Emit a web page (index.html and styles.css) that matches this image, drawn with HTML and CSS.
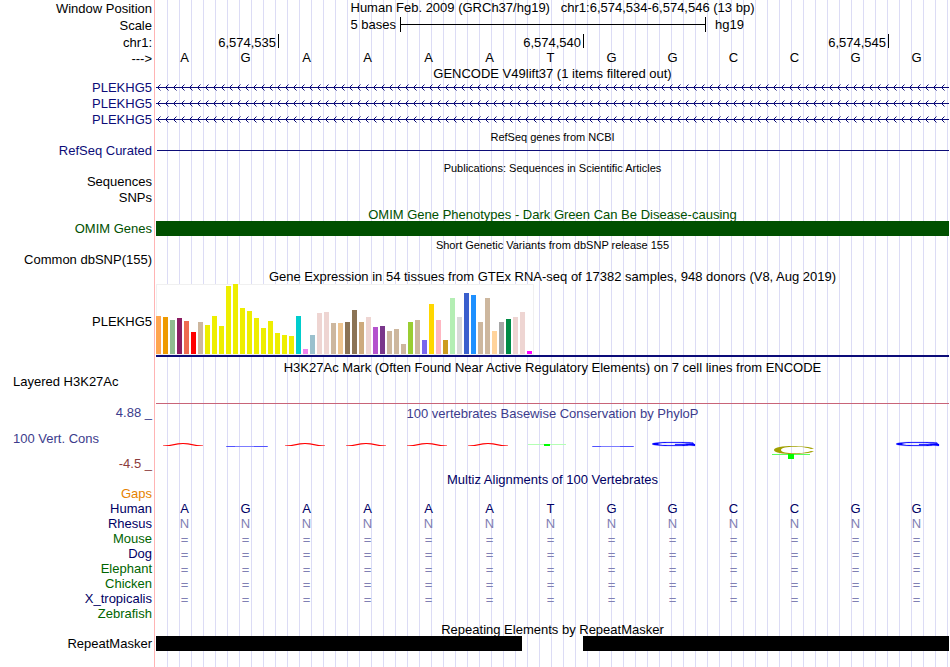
FILE: index.html
```
<!DOCTYPE html>
<html lang="en">
<head>
    <meta charset="utf-8">
    <title>Human hg19 chr1:6,574,534-6,574,546</title>
    <link rel="stylesheet" href="styles.css">
</head>
<body>
    <main class="browser">
        <div class="row tall">
            <div class="label">Window Position</div>
            <div class="track title top">Human Feb. 2009 (GRCh37/hg19) &nbsp; chr1:6,574,534-6,574,546 (13 bp)</div>
        </div>
        <div class="row tall">
            <div class="label">Scale</div>
            <div class="track columns scale">
                <span class="scale-size">5 bases</span>
                <span class="scale-bar"></span>
                <span class="scale-db">hg19</span>
            </div>
        </div>
        <div class="row tall">
            <div class="label">chr1:</div>
            <div class="track columns ruler">
                <span class="tick first">6,574,535</span>
                <span class="tick">6,574,540</span>
                <span class="tick">6,574,545</span>
            </div>
        </div>
        <div class="row line">
            <div class="label">---&gt;</div>
            <div class="track columns bases" data-bases="AGAAAATGGCCGG"></div>
        </div>

        <div class="row short">
            <div class="label"></div>
            <div class="track title">GENCODE V49lift37 (1 items filtered out)</div>
        </div>
        <div class="row navy">
            <div class="label">PLEKHG5</div>
            <div class="track">
                <svg class="intron" width="100%" height="16">
                    <defs>
                        <pattern id="chevron" width="8" height="16" patternUnits="userSpaceOnUse">
                            <path d="M4.5 4.5L1.5 7.5L4.5 10.5" fill="none" stroke="#0c0c78" stroke-width="1"/>
                        </pattern>
                    </defs>
                    <rect width="100%" height="16" fill="url(#chevron)"/>
                    <rect y="7" width="100%" height="1" fill="#0c0c78"/>
                </svg>
            </div>
        </div>
        <div class="row navy">
            <div class="label">PLEKHG5</div>
            <div class="track">
                <svg class="intron" width="100%" height="16">
                    <rect width="100%" height="16" fill="url(#chevron)"/>
                    <rect y="7" width="100%" height="1" fill="#0c0c78"/>
                </svg>
            </div>
        </div>
        <div class="row navy">
            <div class="label">PLEKHG5</div>
            <div class="track">
                <svg class="intron" width="100%" height="16">
                    <rect width="100%" height="16" fill="url(#chevron)"/>
                    <rect y="7" width="100%" height="1" fill="#0c0c78"/>
                </svg>
            </div>
        </div>

        <div class="row line">
            <div class="label"></div>
            <div class="track title small">RefSeq genes from NCBI</div>
        </div>
        <div class="row navy">
            <div class="label">RefSeq Curated</div>
            <div class="track"><div class="gene-line"></div></div>
        </div>

        <div class="row line">
            <div class="label"></div>
            <div class="track title small">Publications: Sequences in Scientific Articles</div>
        </div>
        <div class="row">
            <div class="label">Sequences</div>
            <div class="track"></div>
        </div>
        <div class="row">
            <div class="label">SNPs</div>
            <div class="track"></div>
        </div>

        <div class="row line omim">
            <div class="label"></div>
            <div class="track title low">OMIM Gene Phenotypes - Dark Green Can Be Disease-causing</div>
        </div>
        <div class="row line omim">
            <div class="label">OMIM Genes</div>
            <div class="track"><div class="block"></div></div>
        </div>

        <div class="row">
            <div class="label"></div>
            <div class="track title small">Short Genetic Variants from dbSNP release 155</div>
        </div>
        <div class="row">
            <div class="label">Common dbSNP(155)</div>
            <div class="track"></div>
        </div>

        <div class="row">
            <div class="label"></div>
            <div class="track title low">Gene Expression in 54 tissues from GTEx RNA-seq of 17382 samples, 948 donors (V8, Aug 2019)</div>
        </div>
        <div class="row gtex">
            <div class="label">PLEKHG5</div>
            <div class="track">
                <div class="tissues" id="tissues"></div>
                <div class="gtex-gene"></div>
            </div>
        </div>

        <div class="row line">
            <div class="label"></div>
            <div class="track title">H3K27Ac Mark (Often Found Near Active Regulatory Elements) on 7 cell lines from ENCODE</div>
        </div>
        <div class="row h3k">
            <div class="label left">Layered H3K27Ac</div>
            <div class="track"><div class="baseline"></div></div>
        </div>

        <div class="row phylop">
            <div class="label limits">
                <span>4.88 _</span>
                <span class="left">100 Vert. Cons</span>
                <span class="min">-4.5 _</span>
            </div>
            <div class="track">
                <div class="title low">100 vertebrates Basewise Conservation by PhyloP</div>
                <div class="columns logo" id="logo"></div>
            </div>
        </div>

        <div class="row line multiz">
            <div class="label"></div>
            <div class="track title">Multiz Alignments of 100 Vertebrates</div>
        </div>
        <div class="alignment">
            <div class="row line gaps">
                <div class="label">Gaps</div>
                <div class="track"></div>
            </div>
            <div class="row line multiz">
                <div class="label">Human</div>
                <div class="track columns bases" data-bases="AGAAAATGGCCGG"></div>
            </div>
            <div class="row line multiz">
                <div class="label">Rhesus</div>
                <div class="track columns bases faded" data-bases="NNNNNNNNNNNNN"></div>
            </div>
            <div class="row line species">
                <div class="label">Mouse</div>
                <div class="track columns bases faded gap" data-bases="============="></div>
            </div>
            <div class="row line multiz">
                <div class="label">Dog</div>
                <div class="track columns bases faded gap" data-bases="============="></div>
            </div>
            <div class="row line species">
                <div class="label">Elephant</div>
                <div class="track columns bases faded gap" data-bases="============="></div>
            </div>
            <div class="row line species">
                <div class="label">Chicken</div>
                <div class="track columns bases faded gap" data-bases="============="></div>
            </div>
            <div class="row line multiz">
                <div class="label">X_tropicalis</div>
                <div class="track columns bases faded gap" data-bases="============="></div>
            </div>
            <div class="row line species">
                <div class="label">Zebrafish</div>
                <div class="track"></div>
            </div>
        </div>

        <div class="row short">
            <div class="label"></div>
            <div class="track title">Repeating Elements by RepeatMasker</div>
        </div>
        <div class="row line">
            <div class="label">RepeatMasker</div>
            <div class="track columns">
                <div class="block repeat-a"></div>
                <div class="block repeat-b"></div>
            </div>
        </div>
    </main>

    <script>
        // one letter per genome position
        document.querySelectorAll('.bases').forEach((row) => {
            for (const base of row.dataset.bases) {
                const cell = document.createElement('span');
                cell.textContent = base;
                row.appendChild(cell);
            }
        });

        // [colour, height] for each tissue
        const tissues = [
            ['#ffa54f', 38], ['#ee9a00', 37], ['#8fbc8f', 34], ['#8b1c62', 36], ['#ee6a50', 33], ['#ff0000', 22],
            ['#cdb79e', 32], ['#eeee00', 29], ['#eeee00', 38], ['#eeee00', 28], ['#eeee00', 68], ['#eeee00', 70],
            ['#eeee00', 46], ['#eeee00', 43], ['#eeee00', 36], ['#eeee00', 26], ['#eeee00', 33], ['#eeee00', 21],
            ['#eeee00', 19], ['#eeee00', 18], ['#00cdcd', 38], ['#ee82ee', 5], ['#9ac0cd', 19], ['#eed5d2', 41],
            ['#eed5d2', 42], ['#cdb79e', 31], ['#eec591', 31], ['#8b7355', 32], ['#8b7355', 44], ['#cdaa7d', 32],
            ['#eed5d2', 37], ['#b452cd', 27], ['#7a378b', 28], ['#cdb79e', 23], ['#cdb79e', 25], ['#cdb79e', 10],
            ['#9acd32', 32], ['#cdb79e', 34], ['#7a67ee', 14], ['#ffd700', 50], ['#ffb6c1', 34], ['#cd9b1d', 14],
            ['#b4eeb4', 56], ['#d9d9d9', 37], ['#3a5fcd', 61], ['#1e90ff', 59], ['#cdb79e', 32], ['#cdb79e', 56],
            ['#ffd39b', 23], ['#a6a6a6', 32], ['#008b45', 35], ['#eed5d2', 37], ['#eed5d2', 42], ['#ff00ff', 3]
        ];
        const chart = document.getElementById('tissues');
        tissues.forEach(([color, height]) => {
            const bar = document.createElement('div');
            bar.className = 'bar';
            bar.style.background = color;
            bar.style.height = height + 'px';
            chart.appendChild(bar);
        });

        // conservation marks, one drawing per position
        const shapes = {
            a: '<path d="M7 19.2L13 19L22 17.2Q27 16.6 32 17.2L41 19L47 19.2V19.8L40 19.9L32 18.4Q27 17.6 22 18.4L14 19.9L7 19.8Z" fill="#f00"/>',
            g: '<path d="M9 20.5H51" stroke="#7c7cff"/><path d="M10 20.5H18M37 20.5H50" stroke="#4040ff" stroke-width=".7"/>',
            G: '<path d="M50 18L49 16.6C40 15.8 8 15.4 8 18C8 20.4 38 20.4 46 19.5L51 20V18H31V18.7H44C38 19.4 14 19.6 14 18C14 16.4 38 16.4 44 17.6Z" fill="#00f" stroke="#00f" stroke-width=".2"/>',
            t: '<path d="M6 18.5H44" stroke="#b4ffb4"/><path d="M22 18H28V20H22Z" fill="#0f0"/>',
            C: '<path d="M48 22.4C41 19.3 8 18.4 8 24C8 29.6 41 28.7 48 25.6L45 25C38 28 15 28.4 15 24C15 19.6 38 20 45 23Z" fill="#a0a000"/><path d="M6 28.5H44" stroke="#5cff5c"/><path d="M22 28H28V33H22Z" fill="#0f0"/>',
            '-': ''
        };
        const logo = document.getElementById('logo');
        for (const key of 'agaaaatgG-C-G') {
            logo.innerHTML += `<svg viewBox="0 0 61 46" height="46" preserveAspectRatio="none">${shapes[key]}</svg>`;
        }
    </script>
</body>
</html>
```
FILE: styles.css
```
body {
    margin: 0;
    background: #fff;
    color: #000;
    font-family: "Liberation Sans", Arial, sans-serif;
    font-size: 13px;
}

.browser {
    display: flex;
    flex-direction: column;
    min-height: 100vh;
    margin-right: 1px;
    /* red edge of the label column, then guide lines every 12px */
    background:
        linear-gradient(#ffb4b4, #ffb4b4) 154px 0 / 1px 100% no-repeat,
        linear-gradient(#fff, #fff) 0 0 / 156px 100% no-repeat,
        repeating-linear-gradient(to right, transparent 0 11px, #dcdcf5 11px 12px) 156px 0;
}

.row {
    display: flex;
    height: 16px;
    line-height: 16px;
}

.row.tall {
    height: 17px;
    line-height: 17px;
}

.row.line {
    height: 15px;
    line-height: 15px;
}

.row.short {
    height: 14px;
    line-height: 15px;
}

.label {
    flex: none;
    width: 152px;
    margin-right: 4px;
    text-align: right;
    white-space: nowrap;
}

.track {
    flex: 1;
    min-width: 0;
}

.title {
    text-align: center;
    white-space: nowrap;
}

.title.top {
    line-height: 15px;
}

.title.low {
    line-height: 18px;
}

.small {
    font-size: 11px;
    line-height: 18px;
}

.columns {
    display: grid;
    grid-template-columns: repeat(13, 1fr);
}

.bases span {
    padding-right: 4px;
    text-align: center;
    line-height: 14px;
}

.navy {
    color: #0c0c78;
}

.omim {
    color: #005000;
}

.multiz {
    color: #000064;
}

.species {
    color: #006400;
}

.faded {
    color: #8080b4;
}

.alignment .label,
.faded span {
    line-height: 13px;
}

.gap span {
    line-height: 15px;
}

.gaps {
    color: #e68200;
}

/* scale and ruler */
.scale {
    line-height: 16px;
}

.scale-size {
    grid-column: 1 / span 4;
    padding-right: 4px;
    text-align: right;
}

.scale-bar {
    grid-column: 5 / span 5;
    height: 15px;
    margin-right: -1px;
    border: solid #000;
    border-width: 0 1px;
    background: linear-gradient(#000, #000) 0 7px / 100% 1px no-repeat;
}

.scale-db {
    grid-column: 10 / span 4;
    padding-left: 10px;
}

.tick {
    grid-column: span 5;
    height: 14px;
    margin-right: -1px;
    padding-right: 2px;
    border-right: 1px solid #000;
    text-align: right;
}

.tick.first {
    grid-column: span 2;
}

/* items */
.intron {
    display: block;
}

.gene-line {
    height: 1px;
    margin: 7px 0 0 1px;
    background: #0c0c78;
}

.block {
    height: 15px;
    background: #000;
}

.omim .block {
    background: #005000;
}

.repeat-a {
    grid-column: 1 / span 6;
}

.repeat-b {
    grid-column: 8 / span 6;
}

/* expression chart */
.row.gtex {
    height: 76px;
    line-height: 76px;
}

.tissues {
    display: flex;
    align-items: flex-end;
    gap: 2px;
    box-sizing: border-box;
    width: 378px;
    height: 71px;
    background: #fff;
    box-shadow: inset 0 0 0 1px #f0f0f0;
    padding-bottom: 1px;
}

.bar {
    width: 5px;
}

.gtex-gene {
    height: 2px;
    background: #0c0c78;
}

.row.h3k {
    height: 30px;
    line-height: 14px;
}

.left {
    box-sizing: border-box;
    padding-left: 13px;
    text-align: left;
}

.baseline {
    height: 1px;
    margin-top: 28px;
    background: #c86478;
}

/* conservation */
.row.phylop {
    height: 67px;
    color: #3c3c8c;
}

.limits {
    display: flex;
    flex-direction: column;
    justify-content: space-between;
}

.min {
    color: #8c3c3c;
}

.phylop .title {
    height: 21px;
}

.logo svg {
    display: block;
    width: 100%;
}
```
